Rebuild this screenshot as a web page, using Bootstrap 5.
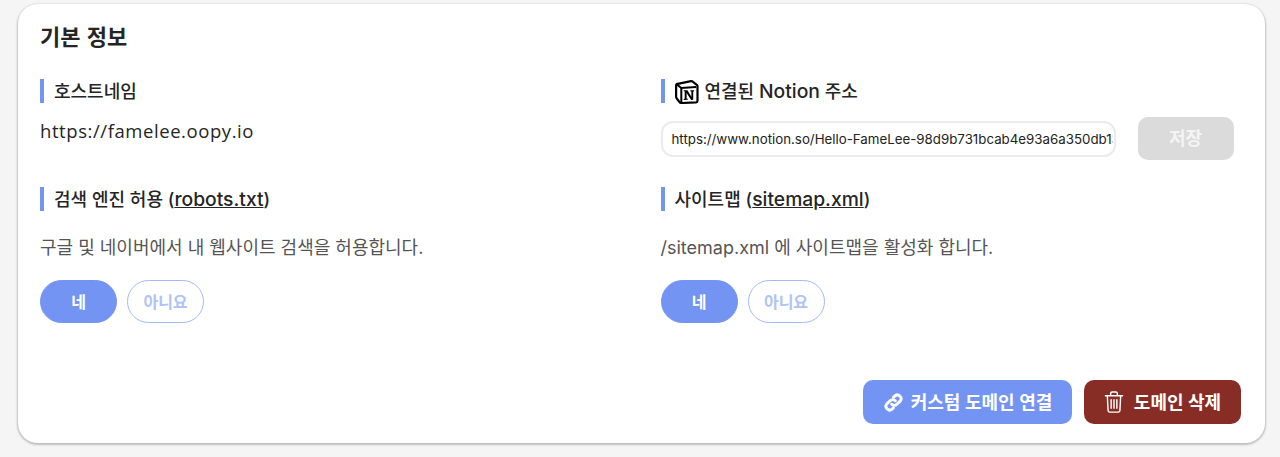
<!DOCTYPE html>
<html lang="ko">
<head>
<meta charset="utf-8">
<title>기본 정보</title>
<link rel="stylesheet" href="https://cdn.jsdelivr.net/npm/bootstrap@5.3.0/dist/css/bootstrap.min.css">
<style>
html,body{height:457px;overflow:hidden}
body{background:#f6f5f5;font-family:"Inter","Noto Sans CJK KR",sans-serif;color:#252525}
.panel{margin:4px 15px 0 18px;height:439px;background:#fff;border-radius:20px;box-shadow:0 1px 2px 1px rgba(0,0,0,.22);padding:18px 24px 19px 22px}
.panel-title{font-size:22px;font-weight:700;line-height:26px;margin:0 0 31px;font-family:"Noto Sans CJK KR",sans-serif}
.fields{display:grid;grid-template-columns:580.5px 580.5px;column-gap:40px}
.field-label{border-left:4px solid #7394f2;height:24px;padding:1px 0 0 10px;font-size:18px;font-weight:500;line-height:24px;display:flex;align-items:center;gap:6px;margin:0}
.field-label a{color:inherit}
.field-label .latin{font-size:19.300px}
.host{font-family:"Open Sans","Noto Sans CJK KR",sans-serif;font-size:18.500px;font-weight:500;line-height:24px;margin-top:16px;height:68px;letter-spacing:.57px}
.url-row{display:flex;align-items:center;margin-top:15px;height:69px;padding-bottom:28px;padding-right:7px;gap:22px}
.url-input{width:455px;height:36px;border:2px solid #ebebeb;border-radius:12px;font-size:13.300px;padding:0 1px 0 9px;color:#222;font-family:"Inter",sans-serif;background:#fff;flex:none;outline:0}
.save-btn{width:96px;height:43px;background:#dbdbdb;border:0;border-radius:10px;color:#f4f4f4;font-weight:700;font-size:18px;flex:none;padding:0;margin-top:-1px}
.desc{font-size:18px;color:#555;line-height:24px;margin:25px 0 20px}
.pill-row{display:flex;gap:10px}
.pill{width:77px;height:43px;border-radius:22px;font-size:16px;font-weight:700;padding:0;border:1px solid #a3baf6;background:#fff;color:#b0c3f7}
.pill.on{background:#7394f2;border-color:#7394f2;color:#fff}
.actions{display:flex;justify-content:flex-end;gap:12px;margin-top:57px}
.act{height:44px;border:0;border-radius:10px;color:#fff;font-weight:600;font-size:18px;display:flex;align-items:center;padding:0;justify-content:center}
.act-link{width:209px;background:#7394f2;gap:7px}
.act-del{width:157px;background:#872d25;gap:10px}
</style>
</head>
<body>
<div class="panel">
  <h2 class="panel-title">기본 정보</h2>
  <div class="fields">
    <div>
      <p class="field-label">호스트네임</p>
      <div class="host">https://famelee.oopy.io</div>
    </div>
    <div>
      <p class="field-label">
        <svg width="24" height="24" viewBox="0 0 24 24" aria-hidden="true"><path d="M1.500 4.200 16 1.200c.9-.1 1.400.1 2 .6l3.800 3c.5.4.7.7.7 1.300v14.600c0 1-.4 1.500-1.500 1.600L6.500 23c-.9 0-1.300-.2-1.800-.8l-2.800-3.500c-.5-.7-.8-1.200-.8-1.900V5.500c0-.6.200-1.100.4-1.300z" fill="#fff" stroke="#000" stroke-width="2.200" stroke-linejoin="round"/><path d="M2 4.500 6.200 8l15-1" fill="none" stroke="#000" stroke-width="2"/><path d="M6.300 8v14.500" stroke="#000" stroke-width="2"/><path d="M8.700 10.300h3.700l4 6.400v-5.200l-1.100-.2v-1h3.800v1l-.9.2v8.300l-2 .2-4.600-7.100v5.600l1.100.2v1l-4 .2v-1l1-.2v-7.400l-1-.1z" fill="#000"/></svg>
        <span>연결된 <span class="latin">Notion</span> 주소</span>
      </p>
      <div class="url-row">
        <input class="url-input" type="text" value="https://www.notion.so/Hello-FameLee-98d9b731bcab4e93a6a350db13a5c7f2" aria-label="Notion 주소">
        <button class="save-btn" type="button">저장</button>
      </div>
    </div>
    <div>
      <p class="field-label"><span>검색 엔진 허용 (<a href="#" class="latin">robots.txt</a>)</span></p>
      <p class="desc">구글 및 네이버에서 내 웹사이트 검색을 허용합니다.</p>
      <div class="pill-row"><button class="pill on" type="button">네</button><button class="pill" type="button">아니요</button></div>
    </div>
    <div>
      <p class="field-label"><span>사이트맵 (<a href="#" class="latin">sitemap.xml</a>)</span></p>
      <p class="desc">/sitemap.xml 에 사이트맵을 활성화 합니다.</p>
      <div class="pill-row"><button class="pill on" type="button">네</button><button class="pill" type="button">아니요</button></div>
    </div>
  </div>
  <div class="actions">
    <button class="act act-link" type="button">
      <svg width="21" height="21" viewBox="0 0 20 20" fill="none" stroke="#fff" stroke-width="2.800" stroke-linecap="round" aria-hidden="true"><path d="M8.300 11.700a3.500 3.500 0 0 0 5 0l3-3a3.550 3.550 0 0 0-5-5l-1.200 1.200"/><path d="M11.700 8.300a3.500 3.500 0 0 0-5 0l-3 3a3.550 3.550 0 0 0 5 5l1.200-1.200"/></svg>
      <span>커스텀 도메인 연결</span>
    </button>
    <button class="act act-del" type="button">
      <svg width="20" height="24" viewBox="0 0 21 24" fill="none" stroke="#fff" stroke-width="1.500" stroke-linecap="round" stroke-linejoin="round" aria-hidden="true"><path d="M1.500 5.500h18M7 5.300V3a1.500 1.500 0 0 1 1.500-1.500h4A1.500 1.500 0 0 1 14 3v2.300"/><path d="M3.500 5.500l.8 15.500a1.800 1.800 0 0 0 1.800 1.600h8.800a1.800 1.800 0 0 0 1.800-1.600l.8-15.500"/><path d="M7.500 9.500v9M10.500 9.500v9M13.500 9.500v9"/></svg>
      <span>도메인 삭제</span>
    </button>
  </div>
</div>
<script src="https://cdn.jsdelivr.net/npm/bootstrap@5.3.0/dist/js/bootstrap.bundle.min.js"></script>
</body>
</html>
